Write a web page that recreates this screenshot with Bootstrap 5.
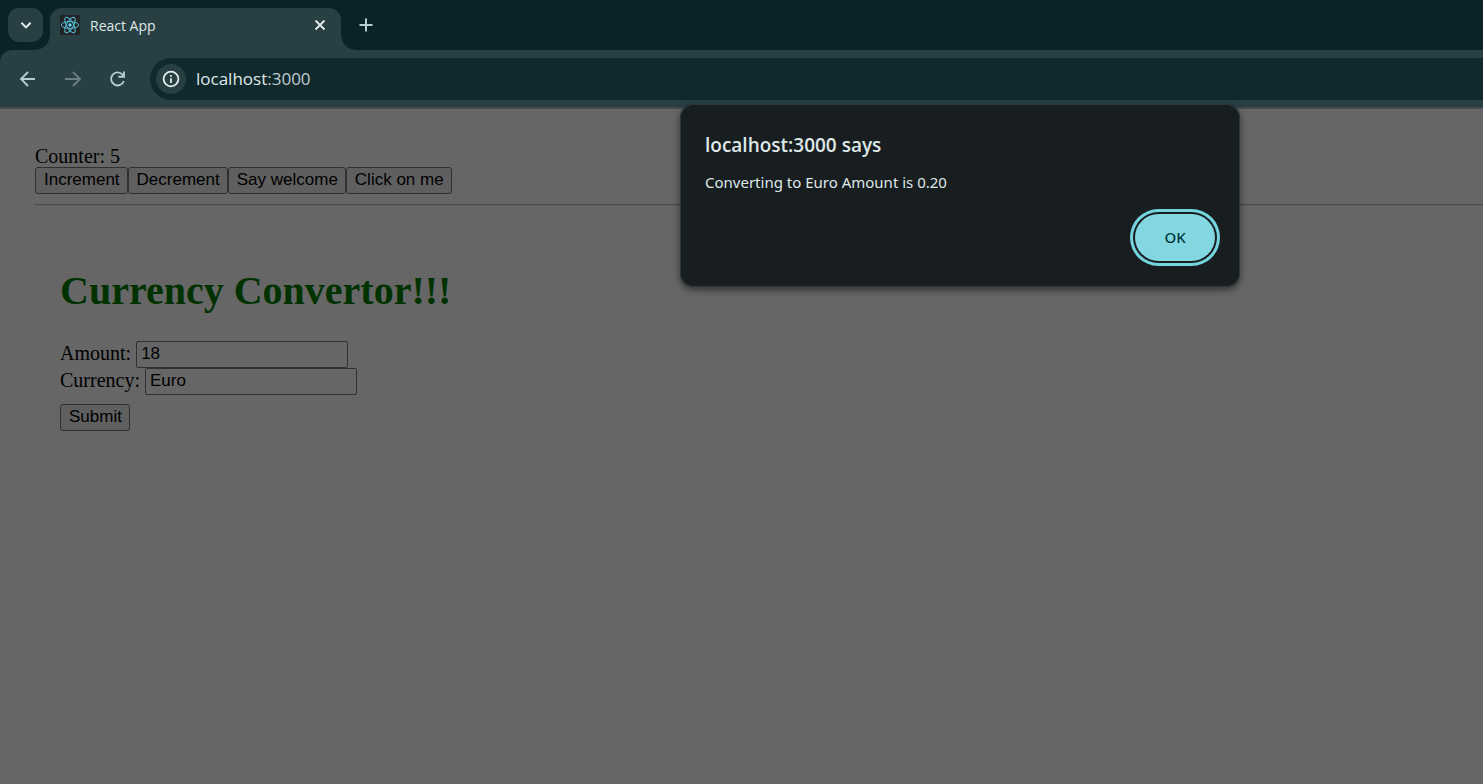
<!DOCTYPE html>
<html lang="en">
<head>
<meta charset="utf-8">
<meta name="viewport" content="width=device-width, initial-scale=1">
<title>React App</title>
<link href="https://cdn.jsdelivr.net/npm/bootstrap@5.3.0/dist/css/bootstrap.min.css" rel="stylesheet">
<style>
  :root { --strip: #0a2327; --bar: #283f43; --field: #10292d; --ink: #dfe8e8; --icon: #b5cdd2; }
  body { background: #666; color: #000; font-family: "Noto Sans", "Open Sans", sans-serif; }
  .tab-strip { background: var(--strip); height: 50px; }
  .chrome-btn { border: 0; padding: 0; background: none; color: var(--icon); display: flex; align-items: center; justify-content: center; }
  .tab-search { width: 35px; height: 34px; border-radius: 11px; background: var(--bar); color: #e4ecec; }
  .browser-tab { width: 291px; height: 42px; margin-left: 7px; padding: 0 15px 8px 10px; background: var(--bar); border-radius: 12px 12px 0 0; color: var(--ink); font-family: "Open Sans", sans-serif; font-size: 14px; }
  .browser-tab::before, .browser-tab::after { content: ""; position: absolute; bottom: 0; width: 14px; height: 14px; }
  .browser-tab::before { right: 100%; background: radial-gradient(circle at 0 0, transparent 13px, var(--bar) 14px); }
  .browser-tab::after { left: 100%; background: radial-gradient(circle at 100% 0, transparent 13px, var(--bar) 14px); }
  .tab-name { margin-left: 10px; }
  .toolbar-wrap { background: var(--strip); }
  .toolbar { background: var(--bar); height: 59px; border-radius: 12px 0 0 0; border-bottom: 2px solid #464b50; padding-left: 17px; }
  .nav-group { gap: 23px; }
  .nav-btn { width: 22px; height: 22px; }
  .address { height: 42px; margin-left: 21px; padding-left: 6px; background: var(--field); border-radius: 21px 0 0 21px; }
  .site-info { width: 30px; height: 30px; border-radius: 50%; background: var(--bar); color: #e4ecec; }
  .url-box { margin-left: 10px; color: #c1cccd; font-family: "Open Sans", sans-serif; font-size: 17px; line-height: 24px; }
  .url-host { color: var(--ink); }
  .app { padding: 37px 0 0 35px; font-family: "Liberation Serif", serif; font-size: 20px; line-height: 21px; }
  .plain-btn, .plain-input { font-family: "Liberation Sans", sans-serif; font-size: 17px; line-height: 19px; color: #000; border: 1px solid #303030; border-radius: 3px; }
  .plain-btn { background: #5f5f5f; padding: 2px 7px 4px 8px; height: 27px; }
  .plain-input { background: #666; width: 212px; height: 27px; padding: 0 4px 2px; border-radius: 2px; }
  .field-label { padding-top: 2px; }
  .rule { height: 2px; margin: 10px 0 0; border: 0; opacity: 1; background: #484848; border-bottom: 1px solid #606060; }
  .converter { padding: 62px 0 0 25px; }
  .converter-title { margin: 0 0 27px; font-size: 40px; font-weight: 700; line-height: 46px; color: #003200; }
  .submit-row { padding-top: 9px; }
  .alert-box { left: 680px; top: 104px; width: 560px; height: 183px; padding: 26px 20px 20px 25px; background: #181d20; border-radius: 14px; box-shadow: inset 0 0 0 1px #2d3a3d, 0 3px 7px rgba(0,0,0,.5); color: var(--ink); }
  .alert-heading-text { margin: 0; font-family: "Open Sans", sans-serif; font-size: 19px; font-weight: 600; line-height: 30px; }
  .alert-message { margin: 8px 0 0; font-size: 15px; line-height: 28px; }
  .ok-btn { width: 80px; height: 47px; margin: 18px 5px 0 0; border: 0; border-radius: 24px; background: #82d7e0; color: #00373e; font-size: 15px; font-weight: 500; box-shadow: 0 0 0 2px #181d20, 0 0 0 5px #75d5df; }
</style>
<script src="https://cdn.jsdelivr.net/npm/bootstrap@5.3.0/dist/js/bootstrap.bundle.min.js"></script>
</head>
<body>
<header>
  <div class="tab-strip d-flex align-items-start pt-2 ps-2">
    <button class="chrome-btn tab-search" type="button" aria-label="Search tabs">
      <svg width="14" height="14" viewBox="0 0 14 14" fill="none" stroke="currentColor" stroke-width="2"><path d="M2.400 4.800 7 9.400l4.600-4.600"/></svg>
    </button>
    <div class="browser-tab position-relative d-flex align-items-center">
      <svg width="20" height="20" viewBox="0 0 20 20" aria-hidden="true">
        <rect width="20" height="20" rx="1" fill="#222426"/>
        <g fill="none" stroke="#55bcd4" stroke-width="1">
          <ellipse cx="10" cy="10" rx="8.700" ry="3.400"/>
          <ellipse cx="10" cy="10" rx="8.700" ry="3.400" transform="rotate(60 10 10)"/>
          <ellipse cx="10" cy="10" rx="8.700" ry="3.400" transform="rotate(120 10 10)"/>
        </g>
        <circle cx="10" cy="10" r="1.700" fill="#61dafb"/>
      </svg>
      <span class="flex-grow-1 tab-name">React App</span>
      <button class="chrome-btn" type="button" aria-label="Close tab">
        <svg width="12" height="12" viewBox="0 0 12 12" stroke="#e4ecec" stroke-width="1.800"><path d="m1.500 1.500 9 9M10.500 1.500l-9 9"/></svg>
      </button>
    </div>
    <button class="chrome-btn ms-3 mt-2" type="button" aria-label="New tab">
      <svg width="18" height="18" viewBox="0 0 18 18" stroke="currentColor" stroke-width="2"><path d="M9 2.500v13M2.500 9h13"/></svg>
    </button>
  </div>
  <div class="toolbar-wrap">
    <div class="toolbar d-flex align-items-center">
      <div class="nav-group d-flex">
        <button class="chrome-btn nav-btn" type="button" aria-label="Back">
          <svg width="22" height="22" viewBox="0 0 22 22" fill="none" stroke="currentColor" stroke-width="1.800"><path d="M18 11H4.500M11 4l-7 7 7 7"/></svg>
        </button>
        <button class="chrome-btn nav-btn" type="button" aria-label="Forward">
          <svg width="22" height="22" viewBox="0 0 22 22" fill="none" stroke="#6d7f83" stroke-width="1.800"><path d="M3 11h14.500M11 4l7 7-7 7"/></svg>
        </button>
        <button class="chrome-btn nav-btn" type="button" aria-label="Reload">
          <svg width="22" height="22" viewBox="0 0 22 22" fill="none" stroke="currentColor" stroke-width="1.900"><path d="M16.800 13A6.500 6.500 0 1 1 15.500 6.600L17 8.500M11.300 8.800h5.700V3.500"/></svg>
        </button>
      </div>
      <div class="address d-flex align-items-center flex-grow-1">
        <button class="chrome-btn site-info" type="button" aria-label="Site information">
          <svg width="18" height="18" viewBox="0 0 18 18" fill="none" stroke="currentColor" stroke-width="1.800"><circle cx="9" cy="9" r="7.400"/><path d="M9 8.200v4.800M9 5v1.800"/></svg>
        </button>
        <div class="url-box" role="textbox" aria-label="Address"><span class="url-host">localhost</span>:3000</div>
      </div>
    </div>
  </div>
</header>

<main class="app">
  <div>Counter: 5</div>
  <div class="d-flex">
    <button class="plain-btn" type="button">Increment</button>
    <button class="plain-btn" type="button">Decrement</button>
    <button class="plain-btn" type="button">Say welcome</button>
    <button class="plain-btn" type="button">Click on me</button>
  </div>
  <hr class="rule">
  <section class="converter">
    <h1 class="converter-title">Currency Convertor!!!</h1>
    <form>
      <div class="d-flex"><label class="field-label" for="amount">Amount:&nbsp;</label><input class="plain-input" id="amount" type="text" value="18"></div>
      <div class="d-flex"><label class="field-label" for="currency">Currency:&nbsp;</label><input class="plain-input" id="currency" type="text" value="Euro"></div>
      <div class="submit-row d-flex"><button class="plain-btn" type="button">Submit</button></div>
    </form>
  </section>
</main>

<div class="alert-box position-absolute d-flex flex-column" role="alertdialog" aria-labelledby="alertTitle" aria-describedby="alertText">
  <h2 class="alert-heading-text" id="alertTitle">localhost:3000 says</h2>
  <p class="alert-message" id="alertText">Converting to Euro Amount is 0.20</p>
  <button class="ok-btn align-self-end" type="button">OK</button>
</div>
</body>
</html>
